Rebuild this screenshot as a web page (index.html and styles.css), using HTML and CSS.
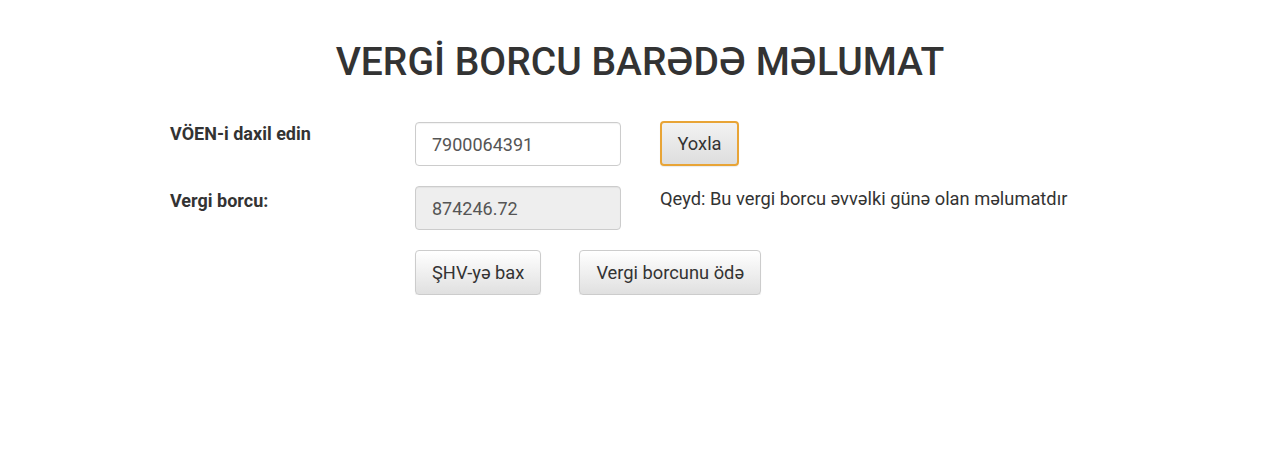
FILE: index.html
```html
<!DOCTYPE html>
<html lang="az">
<head>
<meta charset="utf-8">
<title>Vergi borcu</title>
<link rel="stylesheet" href="styles.css">
</head>
<body>
<div class="page">
  <h1 class="title">VERGİ BORCU BARƏDƏ MƏLUMAT</h1>
  <div class="form">
    <div class="row">
      <div class="label">VÖEN-i daxil edin</div>
      <div class="field"><input class="input" type="text" value="7900064391"></div>
      <div class="side"><button class="btn btn-focus" type="button">Yoxla</button></div>
    </div>
    <div class="row">
      <div class="label label-low">Vergi borcu:</div>
      <div class="field"><input class="input input-disabled" type="text" value="874246.72" disabled></div>
      <div class="side note">Qeyd: Bu vergi borcu əvvəlki günə olan məlumatdır</div>
    </div>
    <div class="row">
      <div class="label"></div>
      <div class="actions">
        <button class="btn" type="button">ŞHV-yə bax</button>
        <button class="btn" type="button">Vergi borcunu ödə</button>
      </div>
    </div>
  </div>
</div>
</body>
</html>
```
FILE: styles.css
```css
html, body {
  margin: 0;
  padding: 0;
  background: #fff;
}
body {
  font-family: Roboto, "Liberation Sans", sans-serif;
  color: #333;
}
.page {
  width: 940px;
  margin: 0 auto;
  padding-top: 37px;
}
.title {
  margin: 0 0 35px;
  text-align: center;
  font-size: 39px;
  font-weight: 500;
  line-height: 50px;
  color: #333;
}
.form {
  display: flex;
  flex-direction: column;
  gap: 20px;
}
.row {
  display: flex;
  align-items: flex-start;
}
.label {
  width: 245px;
  flex: none;
  font-size: 18px;
  font-weight: 700;
  line-height: 24px;
}
.label-low {
  padding-top: 3px;
}
.field {
  width: 206px;
  flex: none;
  margin-right: 39px;
}
.input {
  box-sizing: border-box;
  width: 206px;
  height: 44px;
  padding: 0 16px;
  border: 1px solid #ccc;
  border-radius: 4px;
  font-family: Roboto, "Liberation Sans", sans-serif;
  font-size: 18px;
  color: #555;
  background: #fff;
  box-shadow: inset 0 1px 1px rgba(0,0,0,0.05);
  outline: none;
}
.input-disabled {
  background: #eee;
  color: #555;
  opacity: 1;
}
.side {
  flex: none;
}
.note {
  font-size: 18.3px;
  line-height: 24px;
  padding-top: 1px;
}
.actions {
  display: flex;
  gap: 38px;
}
.btn {
  box-sizing: border-box;
  height: 45px;
  padding: 0 16px;
  border: 1px solid #ccc;
  border-radius: 4px;
  background: linear-gradient(to bottom, #fff 0%, #e0e0e0 100%);
  font-family: Roboto, "Liberation Sans", sans-serif;
  font-size: 18.3px;
  color: #333;
  box-shadow: 0 1px 1px rgba(0,0,0,0.08);
  cursor: pointer;
}
.btn-focus {
  width: 79px;
  border: 2px solid #e8a436;
  background: linear-gradient(to bottom, #f2f2f2 0%, #dedede 100%);
  margin-top: -1px;
  padding: 0;
}
```
